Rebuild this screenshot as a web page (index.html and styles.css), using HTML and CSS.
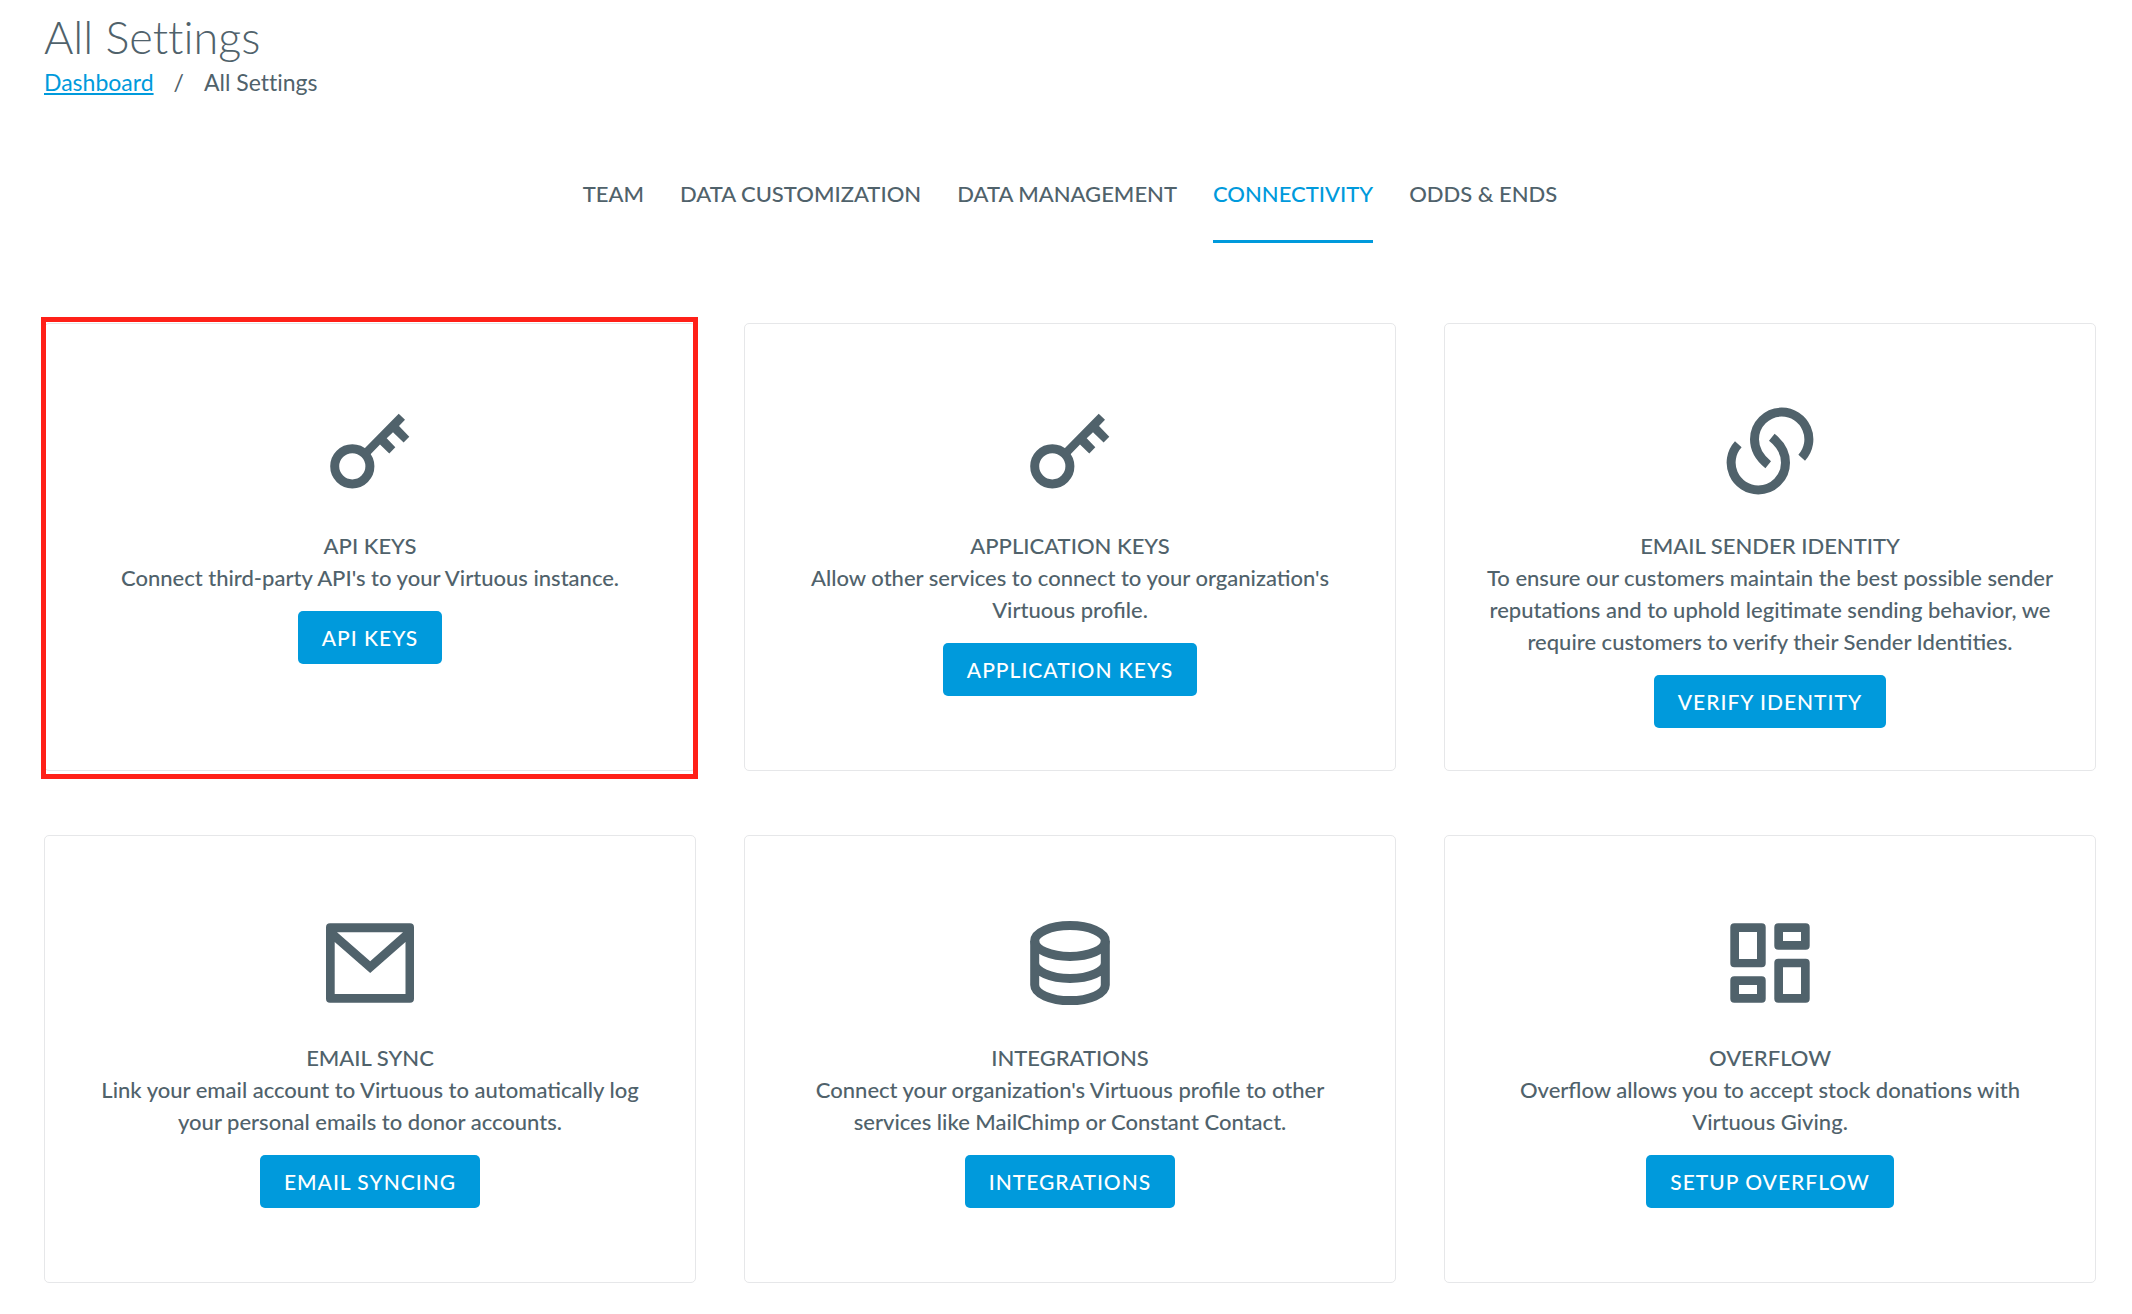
FILE: index.html
```html
<!DOCTYPE html>
<html lang="en">
<head>
<meta charset="utf-8">
<meta name="viewport" content="width=device-width, initial-scale=1">
<title>All Settings</title>
<link rel="stylesheet" href="styles.css">
</head>
<body>
<header class="page-header">
  <h1 class="page-title">All Settings</h1>
  <nav class="breadcrumb" aria-label="Breadcrumb">
    <a class="breadcrumb-link" href="#">Dashboard</a>
    <span class="breadcrumb-separator">/</span>
    <span>All Settings</span>
  </nav>
</header>
<nav class="tabs" aria-label="Settings sections">
  <a class="tab" href="#">TEAM</a>
  <a class="tab" href="#">DATA CUSTOMIZATION</a>
  <a class="tab" href="#">DATA MANAGEMENT</a>
  <a class="tab tab-active" href="#" aria-current="page">CONNECTIVITY</a>
  <a class="tab" href="#">ODDS &amp; ENDS</a>
</nav>
<main class="cards">
  <section class="card card-highlighted">
    <svg class="card-icon" viewBox="0 0 100 100" aria-hidden="true">
      <circle class="line" cx="32.3" cy="66.3" r="17.6"/>
      <path d="M78.7 13.7L85 19.8L79 26L89.3 36.7L83.6 42.6L73 32.3L66.7 38.3L75.3 47.3L69.3 53.6L60 44.6L50.3 54.5L44.5 48.5Z"/>
    </svg>
    <h2 class="card-title">API KEYS</h2>
    <p class="card-text">Connect third-party API's to your Virtuous instance.</p>
    <button class="button" type="button">API KEYS</button>
  </section>
  <section class="card">
    <svg class="card-icon" viewBox="0 0 100 100" aria-hidden="true">
      <circle class="line" cx="32.3" cy="66.3" r="17.6"/>
      <path d="M78.7 13.7L85 19.8L79 26L89.3 36.7L83.6 42.6L73 32.3L66.7 38.3L75.3 47.3L69.3 53.6L60 44.6L50.3 54.5L44.5 48.5Z"/>
    </svg>
    <h2 class="card-title">APPLICATION KEYS</h2>
    <p class="card-text">Allow other services to connect to your organization's Virtuous profile.</p>
    <button class="button" type="button">APPLICATION KEYS</button>
  </section>
  <section class="card">
    <svg class="card-icon" viewBox="0 0 100 100" aria-hidden="true">
      <path class="line" d="M81.7 57.7A27.2 27.2 0 0 0 61.7 12.1A27.2 27.2 0 0 0 34.5 39.3C34.5 49 39.5 57.8 48.2 64.7"/>
      <path class="line" d="M18.3 44.3A27.2 27.2 0 0 0 38.3 89.9A27.2 27.2 0 0 0 65.5 62.7C65.5 53 60.5 44.2 51.8 37.3"/>
    </svg>
    <h2 class="card-title">EMAIL SENDER IDENTITY</h2>
    <p class="card-text">To ensure our customers maintain the best possible sender reputations and to uphold legitimate sending behavior, we require customers to verify their Sender Identities.</p>
    <button class="button" type="button">VERIFY IDENTITY</button>
  </section>
  <section class="card">
    <svg class="card-icon" viewBox="0 0 100 100" aria-hidden="true">
      <path fill-rule="evenodd" d="M10 11.3H90A4 4 0 0 1 94 15.3V86.7A4 4 0 0 1 90 90.7H10A4 4 0 0 1 6 86.7V15.3A4 4 0 0 1 10 11.3ZM17 20.2L50.2 49.3L83 20.2ZM14.7 30V82H85.5V30L50.2 61Z"/>
    </svg>
    <h2 class="card-title">EMAIL SYNC</h2>
    <p class="card-text">Link your email account to Virtuous to automatically log your personal emails to donor accounts.</p>
    <button class="button" type="button">EMAIL SYNCING</button>
  </section>
  <section class="card">
    <svg class="card-icon" viewBox="0 0 100 100" aria-hidden="true">
      <ellipse class="line" cx="50" cy="29" rx="35.3" ry="15.5"/>
      <path class="line" d="M14.7 29V73C14.7 81.6 30.5 88.6 50 88.6S85.3 81.6 85.3 73V29M14.7 51C14.7 59.4 30.5 66.4 50 66.4S85.3 59.4 85.3 51"/>
    </svg>
    <h2 class="card-title">INTEGRATIONS</h2>
    <p class="card-text">Connect your organization's Virtuous profile to other services like MailChimp or Constant Contact.</p>
    <button class="button" type="button">INTEGRATIONS</button>
  </section>
  <section class="card">
    <svg class="card-icon" viewBox="0 0 100 100" aria-hidden="true">
      <path fill-rule="evenodd" d="M14.3 11.3H41.7A4 4 0 0 1 45.7 15.3V51.3A4 4 0 0 1 41.7 55.3H14.3A4 4 0 0 1 10.3 51.3V15.3A4 4 0 0 1 14.3 11.3ZM19 20V47H37V20Z"/>
      <path fill-rule="evenodd" d="M58.3 11.3H85.7A4 4 0 0 1 89.7 15.3V33.7A4 4 0 0 1 85.7 37.7H58.3A4 4 0 0 1 54.3 33.7V15.3A4 4 0 0 1 58.3 11.3ZM63 20V29H81V20Z"/>
      <path fill-rule="evenodd" d="M14.3 64.3H41.7A4 4 0 0 1 45.7 68.3V86.7A4 4 0 0 1 41.7 90.7H14.3A4 4 0 0 1 10.3 86.7V68.3A4 4 0 0 1 14.3 64.3ZM19 73V82H37V73Z"/>
      <path fill-rule="evenodd" d="M58.3 46.7H85.7A4 4 0 0 1 89.7 50.7V86.7A4 4 0 0 1 85.7 90.7H58.3A4 4 0 0 1 54.3 86.7V50.7A4 4 0 0 1 58.3 46.7ZM63 55.3V82H81V55.3Z"/>
    </svg>
    <h2 class="card-title">OVERFLOW</h2>
    <p class="card-text">Overflow allows you to accept stock donations with Virtuous Giving.</p>
    <button class="button" type="button">SETUP OVERFLOW</button>
  </section>
</main>
</body>
</html>
```
FILE: styles.css
```css
:root {
  --ink: #50626b;
  --accent: #009adc;
  --line: #e6e7e9;
}

*,
*::before,
*::after {
  box-sizing: border-box;
}

body {
  margin: 0;
  padding: 10px 36px 28px 44px;
  background: #fff;
  color: var(--ink);
  font: 500 22px/32px Lato, "Liberation Sans", sans-serif;
}

.page-header {
  font-variant-ligatures: none;
}

.page-title {
  margin: 0 0 2px;
  font-size: 45px;
  font-weight: 300;
  line-height: 54px;
}

.breadcrumb {
  display: flex;
  gap: 20px;
  font-size: 23px;
  font-weight: 400;
}

.breadcrumb-link {
  color: var(--accent);
  text-decoration: underline;
  text-decoration-skip-ink: none;
}

.tabs {
  display: flex;
  flex-wrap: wrap;
  justify-content: center;
  gap: 36px;
  margin: 80px 0;
}

.tab {
  padding-bottom: 30px;
  border-bottom: 3px solid transparent;
  color: inherit;
  text-decoration: none;
}

.tab-active {
  border-color: var(--accent);
  color: var(--accent);
}

.cards {
  display: grid;
  grid-template-columns: repeat(3, 1fr);
  grid-auto-rows: 1fr;
  gap: 64px 48px;
}

.card {
  position: relative;
  display: flex;
  flex-direction: column;
  align-items: center;
  padding: 76px 36px 42px;
  border: 1px solid var(--line);
  border-radius: 5px;
  text-align: center;
}

.card-highlighted::after {
  content: "";
  position: absolute;
  inset: -7px -3px -9px -4px;
  border: 5px solid #ff2018;
  pointer-events: none;
}

.card-icon {
  width: 100px;
  height: 100px;
  margin-bottom: 30px;
  fill: var(--ink);
}

.line {
  fill: none;
  stroke: var(--ink);
  stroke-width: 9;
}

.card-title {
  margin: 0;
  font-size: 22px;
  font-weight: 500;
}

.card-text {
  margin: 0 0 17px;
}

.button {
  padding: 0 24px;
  border: 0;
  border-radius: 5px;
  background: var(--accent);
  color: #fff;
  font-family: inherit;
  font-size: 21px;
  font-weight: 500;
  line-height: 53px;
  letter-spacing: 1px;
  cursor: pointer;
}
```
